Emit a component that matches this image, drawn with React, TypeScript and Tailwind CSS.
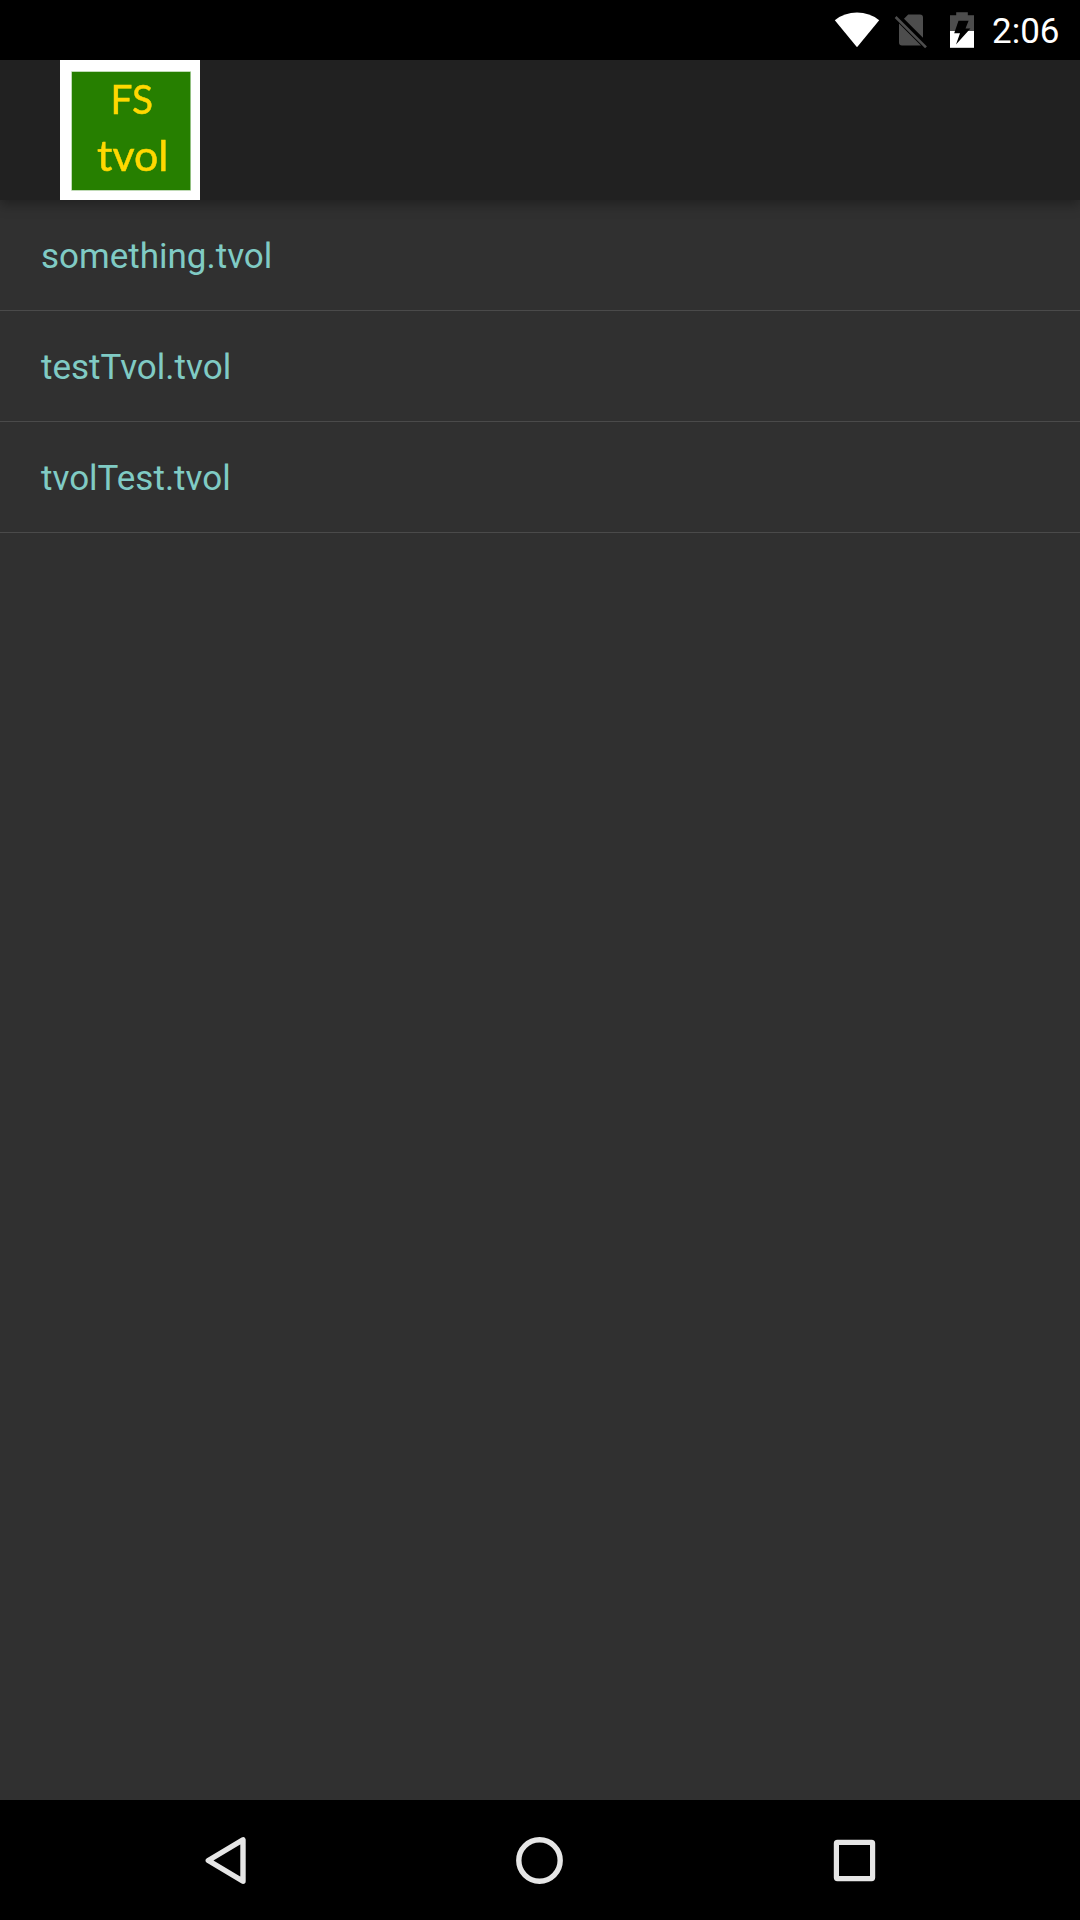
const files = ["something.tvol", "testTvol.tvol", "tvolTest.tvol"];

function StatusBar() {
  return (
    <header className="flex h-[60px] shrink-0 items-start bg-black pl-[834px]">
      <svg className="h-[60px] w-[46px] shrink-0" viewBox="834 0 46 60" aria-label="Wi-Fi">
        <path d="M857 47.2 834.8 20.2Q844.5 12.6 857 12.6T879.2 20.2Z" fill="#fff" />
      </svg>
      <svg className="ml-[13px] h-[60px] w-[36px] shrink-0" viewBox="893 0 36 60" aria-label="No SIM">
        <path
          d="M908.2 14.6H920a3 3 0 0 1 3 3V37.8L904 18.8ZM899 23.6 921 45.6H902a3 3 0 0 1-3-3Z"
          fill="#4d4d4d"
        />
        <path d="M895.6 17 926 47.4" stroke="#4d4d4d" strokeWidth="2.6" />
      </svg>
      <svg className="ml-[19px] h-[60px] w-[28px] shrink-0" viewBox="948 0 28 60" aria-label="Battery charging">
        <path d="M950 31V15.2H956.2V12.2H967.8V15.2H974V31Z" fill="#4d4d4d" />
        <path d="M950 31H974V47.8H950Z" fill="#fff" />
        <path d="M958.5 20.7H968.6L965.5 28.5H970.4L956 44.4 960 33.3H954.2Z" fill="#000" />
      </svg>
      <time className="ml-[16px] font-[Roboto,sans-serif] text-[35px] leading-[64px] text-white">2:06</time>
    </header>
  );
}

function Logo() {
  return (
    <svg className="h-[140px] w-[140px]" viewBox="0 0 140 140" aria-label="FS tvol">
      <rect width="140" height="140" fill="#fff" />
      <rect x="11.3" y="11.3" width="119.6" height="119.4" fill="#a6cc98" />
      <rect x="12" y="12" width="118.2" height="118" fill="#267f00" />
      <g className="font-[Lato,sans-serif] blur-[0.6px]" fill="#ffd800" stroke="#ffd800" strokeWidth="0.5">
        <text x="50.6" y="54.1" fontSize="41" textLength="42.4" lengthAdjust="spacingAndGlyphs">FS</text>
        <text x="37" y="110.8" fontSize="42.5" textLength="71.5" lengthAdjust="spacingAndGlyphs">tvol</text>
      </g>
    </svg>
  );
}

function NavBar() {
  return (
    <nav className="flex h-[120px] shrink-0 items-center bg-black pl-[196px]">
      <svg className="h-[60px] w-[60px]" viewBox="196 1830 60 60" fill="none" stroke="#e6e6e6" strokeWidth="5.4" strokeLinejoin="round">
        <path d="M208.3 1860.5 243 1839.8V1881.2Z" />
      </svg>
      <svg className="ml-[254px] h-[60px] w-[60px]" viewBox="510 1830 60 60" fill="none" stroke="#e6e6e6" strokeWidth="5.4">
        <circle cx="539.5" cy="1860.5" r="20.7" />
      </svg>
      <svg className="ml-[255px] h-[60px] w-[60px]" viewBox="825 1830 60 60" fill="none" stroke="#e6e6e6" strokeWidth="5.2" strokeLinejoin="round">
        <rect x="836.4" y="1842.4" width="36.2" height="36.2" rx="1" />
      </svg>
    </nav>
  );
}

export default function App() {
  return (
    <div className="flex h-[1920px] w-[1080px] flex-col overflow-hidden bg-[#303030] font-[Roboto,sans-serif]">
      <StatusBar />
      <div className="z-10 h-[140px] shrink-0 bg-[#212121] pl-[60px] shadow-[0_4px_12px_rgba(0,0,0,0.35)]">
        <Logo />
      </div>
      <ul className="grow">
        {files.map((name) => (
          <li key={name} className="h-[111px] border-b border-[#4a4a4a] pl-[41px] text-[35px] leading-[113px] text-[#80cbc4]">
            {name}
          </li>
        ))}
      </ul>
      <NavBar />
    </div>
  );
}
